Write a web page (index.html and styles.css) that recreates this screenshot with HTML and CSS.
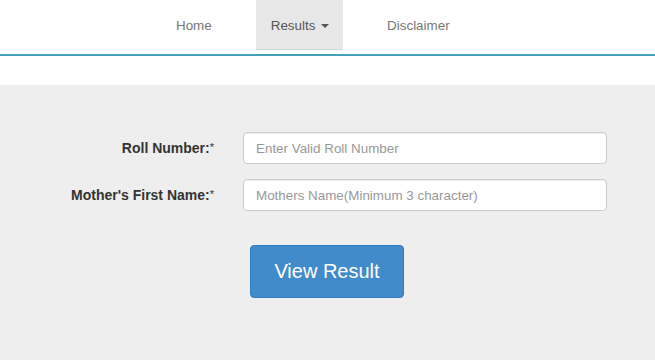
FILE: index.html
```html
<!DOCTYPE html>
<html lang="en">
<head>
  <meta charset="UTF-8">
  <meta name="viewport" content="width=device-width, initial-scale=1.0">
  <title>Results</title>
  <link rel="stylesheet" href="styles.css">
</head>
<body>

<div class="navbar">
  <ul class="nav">
    <li><a href="#">Home</a></li>
    <li class="active"><a href="#">Results <span class="caret"></span></a></li>
    <li><a href="#">Disclaimer</a></li>
  </ul>
</div>

<div class="spacer"></div>

<div class="result-form">
  <form class="form-horizontal">
    <div class="form-group">
      <label for="roll">Roll Number:<span class="req">*</span></label>
      <input type="text" id="roll" placeholder="Enter Valid Roll Number">
    </div>
    <div class="form-group">
      <label for="mname">Mother's First Name:<span class="req">*</span></label>
      <input type="text" id="mname" placeholder="Mothers Name(Minimum 3 character)">
    </div>
    <div class="actions">
      <button type="button" class="view-btn">View Result</button>
    </div>
  </form>
</div>

</body>
</html>
```

FILE: styles.css
```css
body {
  font-family: "Liberation Sans", Arial, Helvetica, sans-serif;
  font-size: 14px;
  margin: 0;
  background-color: #fff;
  color: #333;
}

.navbar {
  height: 54px;
  border-bottom: 2px solid #3fa2b5;
}

.nav {
  list-style: none;
  margin: 0;
  padding: 0 0 0 161px;
  display: flex;
  gap: 29px;
}

.nav a {
  display: block;
  padding: 16px 15px 14px;
  line-height: 20px;
  font-size: 13.4px;
  color: #777;
  text-decoration: none;
}

.nav .active a {
  background-color: #e7e7e7;
  color: #555;
  border-bottom: 1px solid #d8d8d8;
  padding: 16px 14px 13px 15px;
}

.caret {
  display: inline-block;
  width: 0;
  height: 0;
  margin-left: 2px;
  vertical-align: middle;
  border-top: 4px solid #555;
  border-left: 4px solid transparent;
  border-right: 4px solid transparent;
}

.spacer {
  height: 29px;
}

.result-form {
  background-color: #eee;
  padding: 47px 0 70px;
}

.form-group {
  display: flex;
  align-items: center;
  margin-bottom: 15px;
}

.form-group label {
  width: 214px;
  text-align: right;
  font-weight: bold;
  color: #333;
  margin-right: 29px;
}

.req {
  font-weight: normal;
  font-size: 11px;
  vertical-align: 2px;
}

.form-group input {
  width: 364px;
  height: 32px;
  box-sizing: border-box;
  padding: 6px 12px;
  font-family: inherit;
  font-size: 13.4px;
  color: #555;
  background-color: #fff;
  border: 1px solid #ccc;
  border-radius: 4px;
  box-shadow: inset 0 1px 1px rgba(0, 0, 0, 0.075);
}

.form-group input::placeholder {
  color: #999;
}

.actions {
  padding: 19px 0 0 250px;
}

.view-btn {
  width: 154px;
  height: 53px;
  font-family: inherit;
  font-size: 20px;
  color: #fff;
  background-color: #428bca;
  border: 1px solid #357ebd;
  border-radius: 4px;
  cursor: pointer;
}
```
